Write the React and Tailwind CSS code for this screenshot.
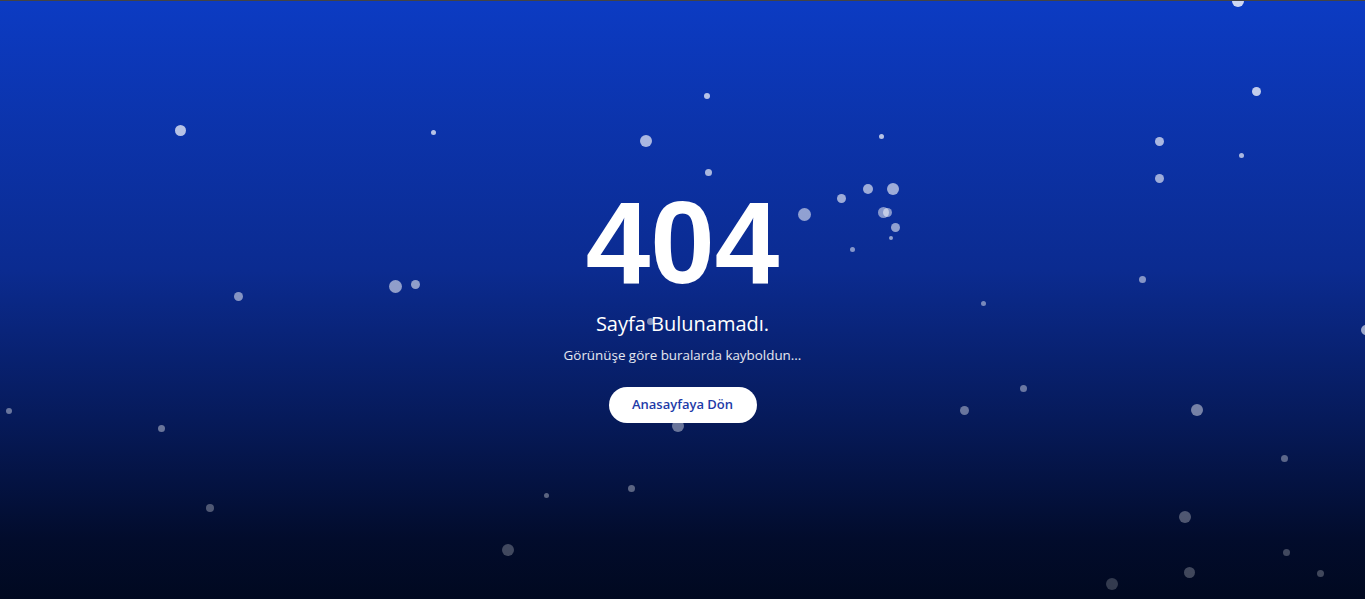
import React from "react";

// x, y = centre, d = diameter, o = opacity
const DOTS = [
  { x: 1238, y: 1, d: 12, o: 0.8 },
  { x: 180, y: 130, d: 11, o: 0.7 },
  { x: 433, y: 132, d: 5, o: 0.7 },
  { x: 707, y: 96, d: 6, o: 0.7 },
  { x: 646, y: 141, d: 12, o: 0.65 },
  { x: 881, y: 136, d: 5, o: 0.7 },
  { x: 1159, y: 141, d: 9, o: 0.65 },
  { x: 1256, y: 91, d: 9, o: 0.75 },
  { x: 1241, y: 155, d: 5, o: 0.65 },
  { x: 708, y: 172, d: 7, o: 0.65 },
  { x: 1159, y: 178, d: 9, o: 0.6 },
  { x: 868, y: 189, d: 10, o: 0.6 },
  { x: 893, y: 189, d: 12, o: 0.6 },
  { x: 841, y: 198, d: 9, o: 0.6 },
  { x: 804, y: 214, d: 13, o: 0.55 },
  { x: 883, y: 212, d: 11, o: 0.5 },
  { x: 887, y: 212, d: 9, o: 0.5 },
  { x: 895, y: 227, d: 9, o: 0.55 },
  { x: 891, y: 238, d: 4, o: 0.55 },
  { x: 852, y: 249, d: 5, o: 0.5 },
  { x: 238, y: 296, d: 9, o: 0.5 },
  { x: 395, y: 286, d: 13, o: 0.55 },
  { x: 415, y: 284, d: 9, o: 0.55 },
  { x: 1142, y: 279, d: 7, o: 0.5 },
  { x: 983, y: 303, d: 5, o: 0.45 },
  { x: 1366, y: 330, d: 10, o: 0.6 },
  { x: 650, y: 321, d: 7, o: 0.45 },
  { x: 9, y: 411, d: 6, o: 0.4 },
  { x: 161, y: 428, d: 7, o: 0.4 },
  { x: 1023, y: 388, d: 7, o: 0.4 },
  { x: 964, y: 410, d: 9, o: 0.4 },
  { x: 1197, y: 410, d: 12, o: 0.45 },
  { x: 678, y: 426, d: 12, o: 0.4 },
  { x: 1284, y: 458, d: 7, o: 0.35 },
  { x: 631, y: 488, d: 7, o: 0.35 },
  { x: 546, y: 495, d: 5, o: 0.35 },
  { x: 210, y: 508, d: 8, o: 0.3 },
  { x: 1185, y: 517, d: 12, o: 0.3 },
  { x: 508, y: 550, d: 12, o: 0.25 },
  { x: 1286, y: 552, d: 7, o: 0.25 },
  { x: 1189, y: 572, d: 11, o: 0.25 },
  { x: 1320, y: 573, d: 7, o: 0.25 },
  { x: 1112, y: 584, d: 12, o: 0.2 },
];

export default function App() {
  return (
    <div className="relative h-[599px] w-full overflow-hidden border-t border-[#444] bg-[linear-gradient(to_bottom,#0c3bc3_0%,#0b2b90_45%,#061a5a_70%,#020c2c_90%,#010920_100%)]">
      {DOTS.map((p, i) => (
        <span
          key={i}
          className="pointer-events-none absolute rounded-full bg-white"
          style={{
            left: p.x - p.d / 2,
            top: p.y - p.d / 2 - 1,
            width: p.d,
            height: p.d,
            opacity: p.o,
          }}
        />
      ))}
      <div className="relative flex h-full flex-col items-center pt-[184px] text-white">
        <h1 className="font-['Liberation_Sans',Arial,sans-serif] text-[116px] font-bold leading-none">
          404
        </h1>
        <p className="mt-[10px] font-['Open_Sans',sans-serif] text-[20px] leading-[26px]">
          Sayfa Bulunamadı.
        </p>
        <p className="mt-[9px] font-['Open_Sans',sans-serif] text-[13.4px] leading-[18px] text-white/90">
          Görünüşe göre buralarda kayboldun...
        </p>
        <button
          type="button"
          className="mt-[23px] h-9 w-[148px] rounded-full bg-white font-['Open_Sans',sans-serif] text-[13px] font-semibold text-[#1e3ba8]"
        >
          Anasayfaya Dön
        </button>
      </div>
    </div>
  );
}
